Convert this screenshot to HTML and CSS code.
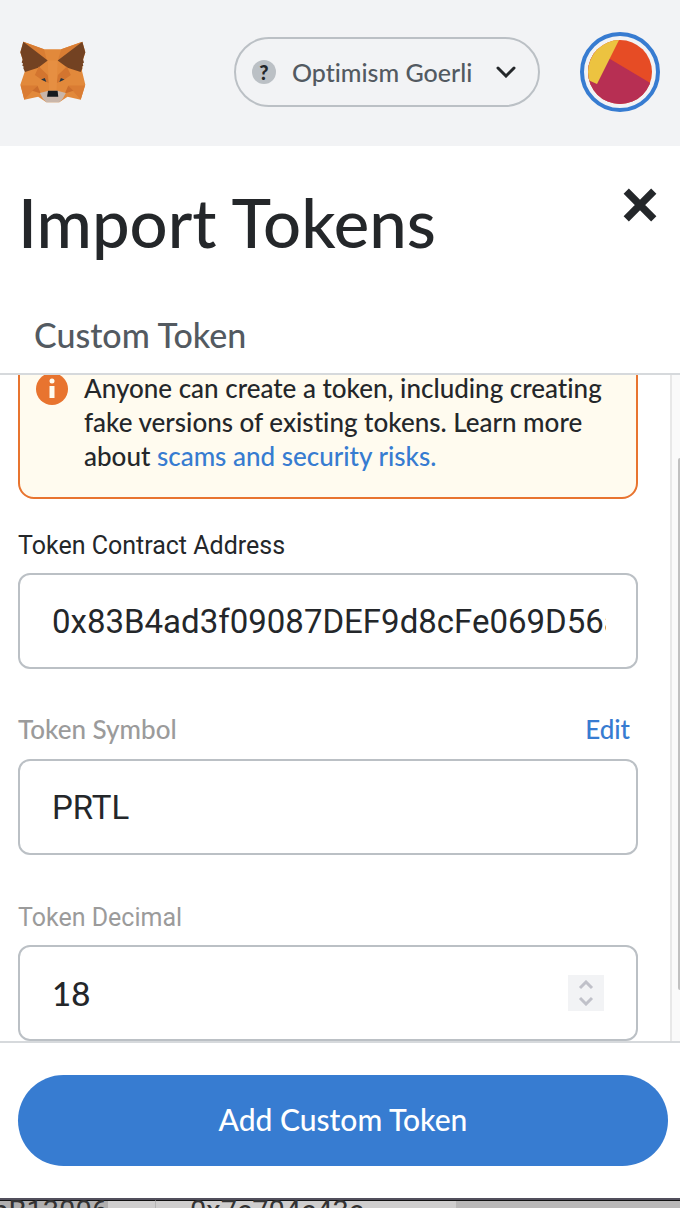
FILE: index.html
```html
<!DOCTYPE html>
<html lang="en">
<head>
<meta charset="utf-8">
<meta name="viewport" content="width=device-width, initial-scale=1">
<title>Import Tokens</title>
<link rel="stylesheet" href="styles.css">
</head>
<body>
<div class="app">
  <header class="app-header">
    <svg class="fox" viewBox="59 62 200 188" aria-label="MetaMask" role="img">
      <path fill="#e2893b" d="M69 64 L132 87 H184 L248 64 L257 96 L251 116 L247 153 L257 195 L243 240 L203 231 L178 248 H139 L114 231 L72 240 L60 195 L74 153 L66 116 L60 96Z"/>
      <path fill="#d97d33" d="M69 64 L132 87 L140 120Z M248 64 L184 87 L174 120Z"/>
      <path fill="#734222" d="M69 64 L143 121 L114 143 L74 156 L69 145 L70 139 L66 137 L68 130 L64 127 L67 118 L60 96Z M248 64 L173 121 L203 143 L243 156 L248 145 L247 139 L251 137 L249 130 L253 127 L250 118 L257 96Z"/>
      <path fill="#d3752f" d="M116 139 L143 165 L147 190 L122 178 L104 165Z M201 139 L174 165 L170 190 L195 178 L213 165Z"/>
      <path fill="#da7c33" d="M61 197 H112 L72 240Z M256 197 H205 L243 240Z"/>
      <path fill="#cb6d2c" d="M112 198 L122 221 L96 213Z M205 198 L195 221 L221 213Z"/>
      <path fill="#e68f42" d="M143 121 H173 L170 213 H147Z"/>
      <path fill="#273642" d="M123 179 L134 174 L139 186Z M194 179 L183 174 L178 186Z"/>
      <path fill="#c9b6aa" d="M119 220 L145 213 H172 L198 220 L188 238 L178 248 H139 L129 238Z"/>
      <path fill="#15191d" d="M144 213 H173 L175 231 H141Z"/>
    </svg>
    <button class="network" type="button">
      <span class="network-mark">?</span>
      <span class="network-name">Optimism Goerli</span>
      <svg class="chevron" viewBox="0 0 20 12" aria-hidden="true"><path d="M2 2 L10 10 L18 2"/></svg>
    </button>
    <button class="account" type="button" aria-label="Account">
      <svg viewBox="0 0 64 64" aria-hidden="true">
        <clipPath id="disc"><circle cx="32" cy="32" r="32"/></clipPath>
        <g clip-path="url(#disc)">
          <path fill="#e64c25" d="M0 0H64V64H0Z"/>
          <path fill="#b72f53" d="M0 8 L22 19 L64 44 V64 H0Z"/>
          <path fill="#ecc340" d="M0 0 H31 L9 44 L0 40Z"/>
        </g>
      </svg>
    </button>
  </header>

  <div class="title-row">
    <h1 class="title">Import Tokens</h1>
    <button class="close" type="button" aria-label="Close">
      <svg viewBox="0 0 34 34" aria-hidden="true"><path d="M4 4 L30 30 M30 4 L4 30"/></svg>
    </button>
  </div>

  <nav class="tabs"><button class="tab" type="button">Custom Token</button></nav>

  <main class="scroller">
    <form class="form" id="token-form">
      <div class="notice">
        <svg class="notice-icon" viewBox="0 0 32 32" aria-hidden="true">
          <circle cx="16" cy="16" r="16" fill="#e8742f"/>
          <circle cx="16" cy="8" r="2.500" fill="#fffbef"/>
          <path fill="#fffbef" d="M13.500 13H18.500V25H13.500Z"/>
        </svg>
        <p class="notice-text">Anyone can create a token, including creating fake versions of existing tokens. Learn more about <a class="link" href="#risks">scams and security risks.</a></p>
      </div>

      <div class="field">
        <div class="field-head"><label class="label label-dark" for="address">Token Contract Address</label></div>
        <input class="input" id="address" type="text" value="0x83B4ad3f09087DEF9d8cFe069D56a">
      </div>

      <div class="field">
        <div class="field-head">
          <label class="label label-round" for="symbol">Token Symbol</label>
          <button class="edit" type="button">Edit</button>
        </div>
        <input class="input" id="symbol" type="text" value="PRTL">
      </div>

      <div class="field">
        <div class="field-head"><label class="label" for="decimal">Token Decimal</label></div>
        <div class="input number">
          <input class="number-input" id="decimal" type="number" value="18">
          <span class="stepper">
            <button class="step" type="button" aria-label="Increase"><svg viewBox="0 0 16 10"><path d="M2 8 L8 2 L14 8"/></svg></button>
            <button class="step" type="button" aria-label="Decrease"><svg viewBox="0 0 16 10"><path d="M2 2 L8 8 L14 2"/></svg></button>
          </span>
        </div>
      </div>
    </form>
    <div class="track"><div class="thumb"></div></div>
  </main>

  <footer class="footer"><button class="submit" type="submit" form="token-form">Add Custom Token</button></footer>

  <div class="behind">
    <div class="cell cell-first"><span class="selected">bB13006</span></div>
    <div class="cell cell-second">0x7c704c43c</div>
    <div class="cell cell-rest"></div>
  </div>
</div>
</body>
</html>
```
FILE: styles.css
```css
* { box-sizing: border-box; }

body {
  margin: 0;
  background: #fff;
  color: #24272a;
  font-family: Lato, "Open Sans", sans-serif;
  font-weight: 500;
  font-variant-ligatures: none;
}

button {
  margin: 0;
  padding: 0;
  border: 0;
  background: none;
  color: inherit;
  font: inherit;
  font-variant-ligatures: none;
  cursor: pointer;
}

svg { display: block; }

.app {
  display: flex;
  flex-direction: column;
  height: 100vh;
  overflow: hidden;
}

.app-header {
  display: flex;
  align-items: center;
  flex: none;
  gap: 40px;
  padding: 32px 20px 34px;
  background: #f2f3f5;
}

.fox {
  width: 66px;
  height: 62px;
  margin-right: auto;
}

.network {
  display: flex;
  align-items: center;
  width: 306px;
  height: 70px;
  padding: 0 22px 0 16px;
  border: 2px solid #bbc0c5;
  border-radius: 35px;
  color: #535a61;
}

.network-mark {
  width: 24px;
  height: 24px;
  border-radius: 50%;
  background: #bbc0c5;
  color: #24272a;
  font-size: 20px;
  font-weight: 900;
  line-height: 24px;
}

.network-name {
  margin-left: 16px;
  font-size: 25px;
  line-height: 32px;
}

.chevron {
  width: 20px;
  height: 12px;
  margin-left: auto;
  fill: none;
  stroke: #24272a;
  stroke-width: 3;
  stroke-linecap: round;
}

.account {
  width: 80px;
  height: 80px;
  padding: 4px;
  border: 4px solid #377cd1;
  border-radius: 50%;
}

.title-row {
  display: flex;
  justify-content: space-between;
  flex: none;
  padding: 32px 22px 0 18px;
}

.title {
  margin: 0;
  font-size: 67px;
  font-weight: 500;
  line-height: 88px;
}

.close {
  width: 36px;
  height: 36px;
  margin-top: 9px;
}

.close path {
  stroke: #24272a;
  stroke-width: 7;
}

.tabs {
  flex: none;
  padding: 32px 16px 0;
  border-bottom: 2px solid #d6d9dc;
}

.tab {
  padding: 16px 18px 18px;
  color: #535a61;
  font-size: 34px;
  line-height: 41px;
}

.scroller {
  display: flex;
  flex: 1 1 0;
  min-height: 0;
  overflow: hidden;
}

/* Content rests at the end of its scroll range */
.form {
  display: flex;
  flex: 1;
  flex-direction: column;
  justify-content: flex-end;
  min-width: 0;
  padding: 0 32px 0 18px;
}

.notice {
  display: flex;
  flex: none;
  gap: 16px;
  margin-bottom: 28px;
  padding: 16px 16px 24px;
  border: 2px solid #e8742f;
  border-radius: 16px;
  background: #fffbef;
}

.notice-icon {
  flex: none;
  width: 32px;
  height: 32px;
  margin-top: 2px;
}

.notice-text {
  margin: 0;
  font-size: 26px;
  line-height: 34px;
}

.link {
  color: #377cd1;
  text-decoration: none;
}

.field { flex: none; }
.field + .field { margin-top: 44px; }

.field-head {
  display: flex;
  align-items: center;
  justify-content: space-between;
  height: 38px;
  margin-bottom: 8px;
  padding-right: 8px;
}

.label {
  color: #9b9b9b;
  font: 400 25px/34px Roboto, sans-serif;
}

.label-dark { color: #24272a; }

.label-round {
  padding-bottom: 6px;
  font: 500 26px/34px Lato, sans-serif;
}

.edit {
  padding-bottom: 6px;
  color: #377cd1;
  font-size: 26px;
  line-height: 34px;
}

.input {
  display: block;
  width: 100%;
  height: 96px;
  padding: 0 30px 0 32px;
  border: 2px solid #bbc0c5;
  border-radius: 12px;
  background: #fff;
  color: #24272a;
  font: 400 33px/40px Roboto, sans-serif;
}

.number {
  display: flex;
  align-items: center;
  padding: 0 32px;
}

.number-input {
  flex: 1;
  min-width: 0;
  padding: 0;
  border: 0;
  background: none;
  color: inherit;
  font: 500 33px/40px Lato, sans-serif;
  appearance: textfield;
}

.number-input::-webkit-inner-spin-button { display: none; }

.stepper {
  display: flex;
  flex-direction: column;
  align-items: center;
  justify-content: center;
  gap: 6px;
  width: 36px;
  height: 36px;
  background: #f2f3f5;
}

.step svg {
  width: 16px;
  height: 10px;
  fill: none;
  stroke: #c0c1c9;
  stroke-width: 3;
}

.track {
  display: flex;
  flex: none;
  justify-content: flex-end;
  width: 10px;
  padding: 83px 0 51px;
  border-left: 2px solid #e8e8e8;
  background: #fafafa;
}

.thumb {
  width: 2px;
  border-radius: 2px 0 0 2px;
  background: #c1c1c1;
}

.footer {
  flex: none;
  padding: 32px 12px 32px 18px;
  border-top: 2px solid #d6d9dc;
}

.submit {
  display: block;
  width: 100%;
  height: 91px;
  padding-bottom: 4px;
  border-radius: 46px;
  background: #377cd1;
  color: #fff;
  font-size: 30px;
}

.behind {
  display: flex;
  flex: none;
  height: 10px;
  overflow: hidden;
  border-top: 2px solid #514f5c;
  background: #cfcece;
}

.cell {
  flex: none;
  height: 20px;
  border-top: 1px solid #111;
  color: #333;
  font: 400 29px/20px Roboto, sans-serif;
  white-space: nowrap;
}

.cell-first {
  display: flex;
  justify-content: flex-start;
  width: 156px;
  border-right: 1px solid #b5b5b5;
}

.selected {
  display: flex;
  justify-content: flex-end;
  width: 108px;
  background: #b0afaf;
}

.cell-second {
  width: 300px;
  padding-left: 34px;
}

.cell-rest {
  flex: 1;
  background: #b9b8b8;
}
```
